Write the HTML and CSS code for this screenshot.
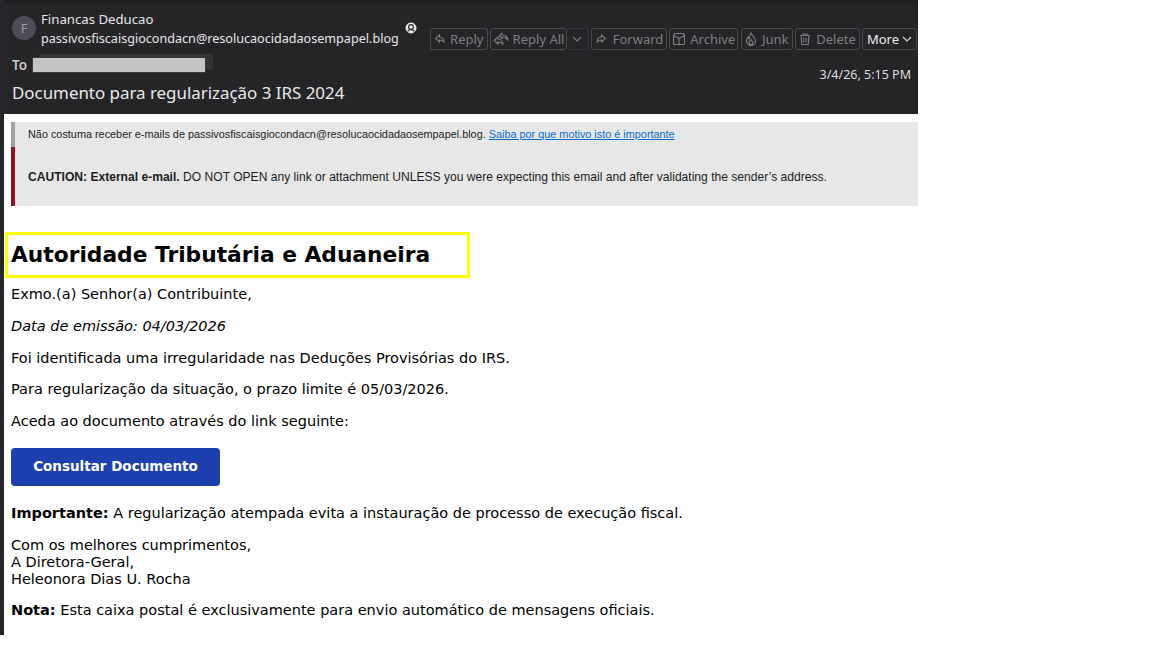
FILE: index.html
```html
<!DOCTYPE html>
<html lang="pt">
<head>
    <meta charset="UTF-8">
    <title>Documento para regularização 3 IRS 2024</title>
    <link rel="stylesheet" href="styles.css">
</head>
<body>
    <div class="mail-window">
        <header class="mail-header">
            <div class="top-row">
                <div class="avatar">F</div>
                <div class="sender">
                    <div class="sender-name">Financas Deducao</div>
                    <div class="sender-mail">passivosfiscaisgiocondacn@resolucaocidadaosempapel.blog</div>
                </div>
                <svg class="contact-icon" width="12" height="12" viewBox="0 0 12 12">
                    <circle cx="6" cy="6" r="5" fill="#ececec" stroke="#ececec"/>
                    <circle cx="6" cy="5" r="2.4" fill="none" stroke="#2a2a2d" stroke-width="1.2"/>
                    <path d="M2.6 9.4c.8-1.4 1.8-1.8 3.4-1.8s2.6.4 3.4 1.8" fill="none" stroke="#2a2a2d" stroke-width="1.2"/>
                </svg>
                <div class="toolbar">
                    <button class="tool-btn btn-reply">
                        <svg width="12" height="12" viewBox="0 0 12 12"><path d="M5.5 2 1.5 5.5 5.5 9V7c2 0 3.500.5 4.500 2.500 0-3-1.500-5.500-4.500-5.500z" class="ico"/></svg>
                        Reply
                    </button>
                    <div class="split">
                        <button class="tool-btn btn-all">
                            <svg width="18" height="14" viewBox="0 0 18 14"><path d="M5 5 1 8.500 5 12v-2c2 0 4 .5 5 2.500 0-3-2-5.500-5-5.500zM9 1.500 6 4l3 2.500V5c3 0 4.500 1 6 3 0-3-2.500-5-6-5z" class="ico"/></svg>
                            Reply All
                        </button>
                        <button class="tool-btn btn-caret">
                            <svg width="10" height="6" viewBox="0 0 10 6"><path d="M1 1l4 4 4-4" class="ico"/></svg>
                        </button>
                    </div>
                    <button class="tool-btn btn-forward">
                        <svg width="12" height="12" viewBox="0 0 12 12"><path d="M6.500 2l4 3.500-4 3.500V7c-2 0-3.500.5-4.500 2.500 0-3 1.500-5.500 4.500-5.500z" class="ico"/></svg>
                        Forward
                    </button>
                    <button class="tool-btn btn-archive">
                        <svg width="14" height="14" viewBox="0 0 14 14"><path d="M2.500 1.500h9l1 2v8a1 1 0 0 1-1 1h-9a1 1 0 0 1-1-1v-8zM1.500 3.500 7 6.500l5.500-3M7 6.500v6" class="ico"/></svg>
                        Archive
                    </button>
                    <button class="tool-btn btn-junk">
                        <svg width="12" height="14" viewBox="0 0 12 14"><path d="M6 1c.5 2.500 4.500 4 4.500 8A4.500 4.500 0 0 1 1.500 9c0-2 1-3 1.700-4 .3 1 .8 1.500 1.300 1.700C4.500 4.500 5 2.500 6 1zM6 12.500c-1.200 0-2-.9-2-2 0-1 1.300-1.800 2-3 .7 1.200 2 2 2 3 0 1.100-.8 2-2 2z" class="ico"/></svg>
                        Junk
                    </button>
                    <button class="tool-btn btn-delete">
                        <svg width="12" height="14" viewBox="0 0 12 14"><path d="M1 3.500h10M4 3.500V2h4v1.500M2.200 3.500l.6 9h6.400l.6-9M4.800 5.500v5M7.200 5.500v5" class="ico"/></svg>
                        Delete
                    </button>
                    <button class="tool-btn btn-more">
                        More
                        <svg width="10" height="6" viewBox="0 0 10 6"><path d="M1 1l4 4 4-4" class="ico"/></svg>
                    </button>
                </div>
            </div>
            <div class="to-row">
                <span class="to-label">To</span>
                <span class="to-blur"></span>
                <span class="mail-date">3/4/26, 5:15 PM</span>
            </div>
            <div class="subject">Documento para regularização 3 IRS 2024</div>
        </header>

        <main class="mail-body">
            <div class="notice notice-grey">
                Não costuma receber e-mails de passivosfiscaisgiocondacn@resolucaocidadaosempapel.blog. <a href="#">Saiba por que motivo isto é importante</a>
            </div>
            <div class="notice notice-red">
                <b>CAUTION: External e-mail.</b> DO NOT OPEN any link or attachment UNLESS you were expecting this email and after validating the sender’s address.
            </div>

            <div class="message">
                <h2 class="authority">Autoridade Tributária e Aduaneira</h2>
                <p>Exmo.(a) Senhor(a) Contribuinte,</p>
                <p><em>Data de emissão: 04/03/2026</em></p>
                <p>Foi identificada uma irregularidade nas Deduções Provisórias do IRS.</p>
                <p>Para regularização da situação, o prazo limite é 05/03/2026.</p>
                <p>Aceda ao documento através do link seguinte:</p>
                <a class="cta" href="#">Consultar Documento</a>
                <p><b>Importante:</b> A regularização atempada evita a instauração de processo de execução fiscal.</p>
                <p>Com os melhores cumprimentos,<br>A Diretora-Geral,<br>Heleonora Dias U. Rocha</p>
                <p><b>Nota:</b> Esta caixa postal é exclusivamente para envio automático de mensagens oficiais.</p>
            </div>
        </main>
    </div>
</body>
</html>
```

FILE: styles.css
```css
body {
    margin: 0;
    background: #fff;
    font-family: 'DejaVu Sans', sans-serif;
}

.mail-window {
    width: 914px;
    height: 635px;
    border-left: 4px solid #25252a;
    overflow: hidden;
    background: #fff;
}

/* Cabecera */
.mail-header {
    box-sizing: border-box;
    height: 114px;
    margin-left: -4px;
    padding: 5px 0 0 12px;
    background: #252528;
    color: #e6e6e8;
    font-family: 'Noto Sans', sans-serif;
    position: relative;
}

.mail-header::before {
    content: "";
    position: absolute;
    top: 0;
    left: 0;
    right: 0;
    height: 5px;
    background: #1f1f22;
}

.top-row {
    display: flex;
    align-items: flex-start;
    padding-top: 6px;
}

.avatar {
    flex: none;
    width: 24px;
    height: 24px;
    margin-top: 5px;
    border-radius: 50%;
    background: #4c4c56;
    color: #9a9aa2;
    font-size: 13px;
    line-height: 24px;
    text-align: center;
}

.sender {
    flex: none;
    margin-left: 5px;
    line-height: 19px;
    white-space: nowrap;
}

.sender-name {
    margin-top: -1px;
    font-size: 13.2px;
}

.sender-mail {
    font-size: 12.6px;
}

.contact-icon {
    flex: none;
    margin: 11px 0 0 6px;
}

.toolbar {
    display: flex;
    flex: none;
    gap: 2.5px;
    margin: 17px 0 0 13px;
}

.tool-btn {
    display: flex;
    align-items: center;
    justify-content: center;
    gap: 3px;
    box-sizing: border-box;
    height: 22px;
    padding: 0;
    background: transparent;
    border: 1px solid #47474c;
    border-radius: 3px;
    color: #7e7e82;
    font-family: 'Noto Sans', sans-serif;
    font-size: 13px;
    white-space: nowrap;
}

.ico {
    fill: none;
    stroke: #7e7e82;
    stroke-width: 1.1;
}

.split {
    display: flex;
}

.btn-reply { width: 58px; gap: 4px; }
.btn-all { width: 76.5px; gap: 2px; }
.btn-forward { width: 75.5px; gap: 6px; }
.btn-archive { width: 69px; gap: 4px; }
.btn-junk { width: 52px; gap: 5px; }
.btn-delete { width: 64.5px; gap: 5px; }

.btn-caret {
    width: 22px;
    border-left: 0;
    border-color: #34343a;
}

.btn-more {
    width: 54.5px;
    color: #ededf0;
}

.btn-more .ico {
    stroke: #dcdce0;
}

.to-row {
    display: flex;
    align-items: center;
    height: 20px;
    margin-top: 5px;
    font-size: 13.5px;
}

.to-label {
    font-weight: 600;
    color: #c8c8cc;
}

.to-blur {
    width: 172px;
    height: 14px;
    margin-left: 6px;
    background: #c4c4c4;
    box-shadow: 0 0 0 1px #3a3a3c, 7px -3px 0 1px #333336;
}

.mail-date {
    margin: 19px 7px 0 auto;
    font-size: 12.5px;
    color: #dcdcde;
}

.subject {
    margin-top: 6px;
    font-size: 16.9px;
    line-height: 24px;
    color: #e9e9eb;
}

/* Cuerpo */
.mail-body {
    padding-top: 8px;
}

.notice {
    box-sizing: border-box;
    margin-left: 7px;
    padding-left: 13px;
    background: #e7e7e7;
    color: #1d1d1d;
    font-family: 'Liberation Sans', sans-serif;
    white-space: nowrap;
}

.notice-grey {
    height: 25px;
    border-left: 4px solid #a2a2a2;
    font-size: 10.87px;
    line-height: 25px;
}

.notice-grey a {
    color: #0a6ccb;
}

.notice-red {
    height: 59px;
    border-left: 4px solid #96101f;
    font-size: 12.09px;
    line-height: 61px;
}

.message {
    padding: 26px 0 0 7px;
    font-size: 14.5px;
    line-height: 17px;
    color: #000;
}

.message p {
    margin: 0 0 14.75px;
}

.authority {
    box-sizing: border-box;
    width: 465px;
    height: 46px;
    margin: 0 0 8px -6px;
    padding-left: 3px;
    border: 3px solid #ff0;
    font-size: 21.75px;
    line-height: 40px;
    white-space: nowrap;
}

.cta {
    display: block;
    width: 209px;
    height: 38px;
    margin: 18.25px 0 18.5px;
    background: #1e40af;
    border-radius: 4px;
    color: #fff;
    font-size: 13.5px;
    font-weight: bold;
    line-height: 37px;
    text-align: center;
    text-decoration: none;
}
```
